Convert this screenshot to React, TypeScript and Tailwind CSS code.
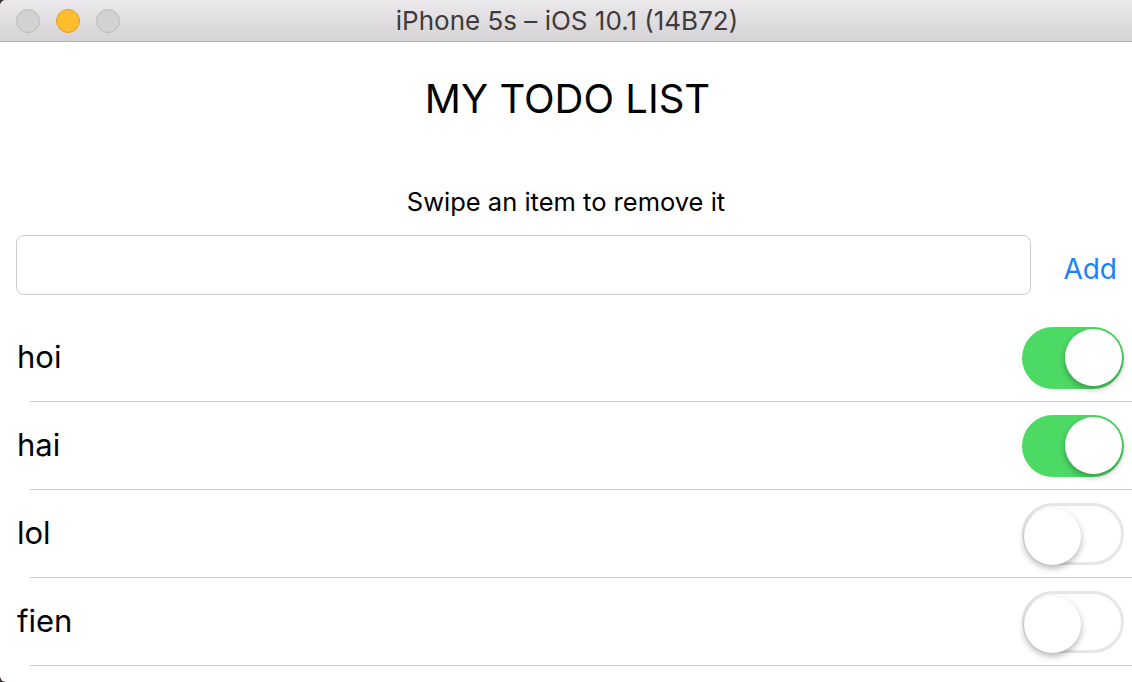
import React, { useState } from "react";

interface Todo {
  name: string;
  done: boolean;
}

const Toggle: React.FC<{ on: boolean; onChange: () => void }> = ({ on, onChange }) => {
  return (
    <button
      onClick={onChange}
      className={
        "relative w-[102px] h-[62px] rounded-full shrink-0 " +
        (on ? "bg-[#4cd964]" : "bg-white border-[3px] border-[#e6e6e6]")
      }
    >
      <span
        className={
          "absolute top-[2px] w-[57px] h-[57px] rounded-full bg-white shadow-[0_3px_6px_rgba(0,0,0,0.3)] " +
          (on ? "right-[2px]" : "-left-[1px] -top-[1px]")
        }
      />
    </button>
  );
};

const App: React.FC = () => {
  const [todos, setTodos] = useState<Todo[]>([
    { name: "hoi", done: true },
    { name: "hai", done: true },
    { name: "lol", done: false },
    { name: "fien", done: false },
  ]);
  const [text, setText] = useState("");

  const handleToggle = (index: number) => {
    setTodos(todos.map((t, i) => (i === index ? { ...t, done: !t.done } : t)));
  };

  const handleAdd = () => {
    if (!text.trim()) return;
    setTodos([...todos, { name: text, done: false }]);
    setText("");
  };

  return (
    <div className="w-[1132px] h-[682px] bg-[#3b3333] overflow-hidden" style={{ fontFamily: "Inter, 'Liberation Sans', sans-serif" }}>
      <div className="w-full h-full bg-white rounded-tl-[6px] rounded-bl-[6px] overflow-hidden flex flex-col">
        {/* title bar */}
        <div className="h-[42px] shrink-0 flex items-center relative bg-gradient-to-b from-[#ebe9eb] to-[#d5d3d5] border-b border-[#b3b1b3]">
          <div className="flex gap-[16px] pl-[16px]">
            <span className="w-[24px] h-[24px] rounded-full bg-[#d3d1d3] border border-[#bcbabc]" />
            <span className="w-[24px] h-[24px] rounded-full bg-[#febc2e] border border-[#e0a028]" />
            <span className="w-[24px] h-[24px] rounded-full bg-[#d3d1d3] border border-[#bcbabc]" />
          </div>
          <div className="absolute inset-0 flex items-center justify-center text-[26px] text-[#3f3a3c] pl-[2px]">
            iPhone 5s – iOS 10.1 (14B72)
          </div>
        </div>

        <h1 className="text-center text-[40px] text-black mt-[31px] leading-[52px] pl-[3px]">MY TODO LIST</h1>
        <p className="text-center text-[25.5px] text-black mt-[62px] leading-[30px]">Swipe an item to remove it</p>

        <div className="flex items-center mt-[18px] pl-[16px] pr-[15px]">
          <input
            value={text}
            onChange={(e) => setText(e.target.value)}
            className="flex-1 h-[60px] border border-[#cccccc] rounded-[8px] outline-none px-3 text-[24px]"
          />
          <button onClick={handleAdd} className="ml-[32px] pt-[7px] text-[28px] text-[#1a82fb]">
            Add
          </button>
        </div>

        <ul className="mt-[19px]">
          {todos.map((todo, index) => (
            <li key={todo.name + index} className="flex flex-col">
              <div className="flex items-center justify-between pl-[17px] pr-[8px] h-[87px]">
                <span className="text-[31px] text-black pb-[1px]">{todo.name}</span>
                <Toggle on={todo.done} onChange={() => handleToggle(index)} />
              </div>
              <div className="ml-[30px] h-px bg-[#c8c7cc]" />
            </li>
          ))}
        </ul>
      </div>
    </div>
  );
};

export default App;
